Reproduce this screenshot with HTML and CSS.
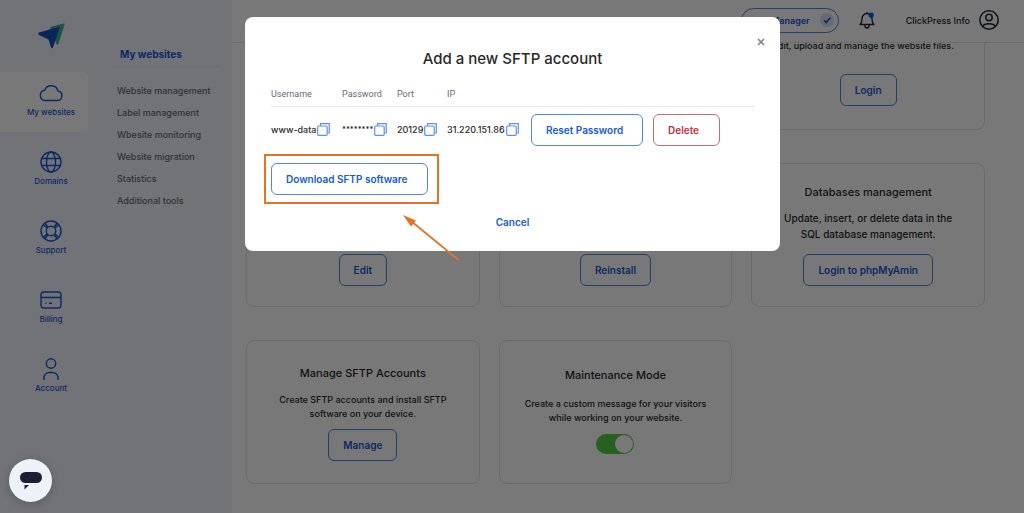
FILE: index.html
```html
<!DOCTYPE html>
<html lang="en">
<head>
    <meta charset="UTF-8">
    <meta name="viewport" content="width=device-width, initial-scale=1.0">
    <title>ClickPress - My websites</title>
    <link rel="stylesheet" href="styles.css">
</head>
<body>
    <div class="app">
        <nav class="rail">
            <a href="#" class="logo" aria-label="ClickPress">
                <svg width="28" height="26" viewBox="0 0 28 26">
                    <path d="M12 4 L25.500 0.500 Q27 0.300 26.500 1.800 L20.500 20.500 Q20 22 18.500 21.500 Z" fill="#38b58a"/>
                    <path d="M1 9.500 L22 3.500 L15 24.500 Q14 26 13 24.500 L10.500 16.500 L1 12 Q-0.500 10.500 1 9.500 Z" fill="#174fc4"/>
                </svg>
            </a>
            <a href="#" class="rail-item active">
                <svg width="26" height="22" viewBox="0 0 26 22"><path d="M7 18.500 H19.500 A4.800 4.800 0 0 0 20 9 A7 7 0 0 0 6.700 8.200 A5.200 5.200 0 0 0 7 18.500 Z"/></svg>
                <span>My websites</span>
            </a>
            <a href="#" class="rail-item">
                <svg width="22" height="22" viewBox="0 0 22 22"><circle cx="11" cy="11" r="10"/><ellipse cx="11" cy="11" rx="4.500" ry="10"/><path d="M1.500 7.500 H20.500 M1.500 14.500 H20.500"/></svg>
                <span>Domains</span>
            </a>
            <a href="#" class="rail-item">
                <svg width="22" height="22" viewBox="0 0 22 22"><circle cx="11" cy="11" r="10"/><circle cx="11" cy="11" r="4.700"/><path d="M3.500 5 L7 8 M5 3.500 L8 7 M18.500 5 L15 8 M17 3.500 L14 7 M3.500 17 L7 14 M5 18.500 L8 15 M18.500 17 L15 14 M17 18.500 L14 15"/></svg>
                <span>Support</span>
            </a>
            <a href="#" class="rail-item">
                <svg width="22" height="22" viewBox="0 0 22 22"><rect x="1" y="3" width="20" height="16" rx="3"/><path d="M1 8.500 H21 M5.500 14.200 H6.500 M9 14.200 H12"/></svg>
                <span>Billing</span>
            </a>
            <a href="#" class="rail-item">
                <svg width="22" height="22" viewBox="0 0 22 22"><circle cx="11" cy="5.500" r="4.700"/><path d="M4 22 V20 A5.500 5.500 0 0 1 9.500 14.500 H12.500 A5.500 5.500 0 0 1 18 20 V22"/></svg>
                <span>Account</span>
            </a>
        </nav>

        <aside class="menu">
            <h2>My websites</h2>
            <a href="#">Website management</a>
            <a href="#">Label management</a>
            <a href="#">Wbesite monitoring</a>
            <a href="#">Website migration</a>
            <a href="#">Statistics</a>
            <a href="#">Additional tools</a>
        </aside>

        <div class="content">
            <header class="topbar">
                <button class="manager">
                    <span>Manager</span>
                    <svg width="14" height="14" viewBox="0 0 14 14"><circle cx="7" cy="7" r="7" fill="#d4e3fb"/><path d="M4 7.300 L6.200 9.500 L10.300 4.800" fill="none" stroke="#1559d6" stroke-width="1.600"/></svg>
                </button>
                <button class="icon-btn" aria-label="Notifications">
                    <svg width="16" height="18" viewBox="0 0 16 18"><path d="M1 13.500 H15 C13.500 12 13 11 13 8.500 V7.500 A5 5 0 0 0 3 7.500 V8.500 C3 11 2.500 12 1 13.500 Z M6 14 V15 A2 2 0 0 0 10 15 V14 M8 2.500 V1" fill="none" stroke="#222838" stroke-width="1.400" stroke-linejoin="round"/><circle cx="12.200" cy="4.200" r="2.600" fill="#1559d6"/></svg>
                </button>
                <a href="#" class="user">
                    <span>ClickPress Info</span>
                    <svg width="20" height="20" viewBox="0 0 20 20" fill="none" stroke="#222838" stroke-width="1.500"><circle cx="10" cy="10" r="9.200"/><circle cx="10" cy="7.500" r="3.200"/><path d="M4 16.500 C5 12.800 15 12.800 16 16.500"/></svg>
                </a>
            </header>

            <main>
                <div class="cards">
                    <section class="card files">
                        <p>Edit, upload and manage the website files.</p>
                        <button class="btn">Login</button>
                    </section>
                    <section class="card">
                        <button class="btn">Edit</button>
                    </section>
                    <section class="card">
                        <button class="btn">Reinstall</button>
                    </section>
                    <section class="card">
                        <h3>Databases management</h3>
                        <p class="large">Update, insert, or delete data in the SQL database management.</p>
                        <button class="btn">Login to phpMyAmin</button>
                    </section>
                    <section class="card sftp">
                        <h3>Manage SFTP Accounts</h3>
                        <p>Create SFTP accounts and install SFTP software on your device.</p>
                        <button class="btn">Manage</button>
                    </section>
                    <section class="card maintenance">
                        <h3 id="maintenance">Maintenance Mode</h3>
                        <p>Create a custom message for your visitors while working on your website.</p>
                        <input type="checkbox" class="switch" aria-labelledby="maintenance" checked>
                    </section>
                </div>
            </main>
        </div>
    </div>

    <div class="overlay">
        <div class="modal" role="dialog" aria-labelledby="modalTitle">
            <button class="close" aria-label="Close">
                <svg width="8" height="8" viewBox="0 0 8 8"><path d="M1 1 L7 7 M7 1 L1 7" stroke="#858585" stroke-width="1.700"/></svg>
            </button>
            <h1 id="modalTitle">Add a new SFTP account</h1>
            <table>
                <thead>
                    <tr>
                        <th class="col-user">Username</th>
                        <th class="col-pass">Password</th>
                        <th class="col-port">Port</th>
                        <th class="col-ip">IP</th>
                        <th></th>
                    </tr>
                </thead>
                <tbody>
                    <tr>
                        <td><div class="value">www-data<button class="copy" aria-label="Copy username"><svg width="13" height="13" viewBox="0 0 13 13"><path d="M3.500 3 V0.700 H12.300 V10 H10.500"/><rect x="0.700" y="3" width="9.500" height="9.300" rx="1"/></svg></button></div></td>
                        <td><div class="value"><span class="stars">********</span><button class="copy" aria-label="Copy password"><svg width="13" height="13" viewBox="0 0 13 13"><path d="M3.500 3 V0.700 H12.300 V10 H10.500"/><rect x="0.700" y="3" width="9.500" height="9.300" rx="1"/></svg></button></div></td>
                        <td><div class="value">20129<button class="copy" aria-label="Copy port"><svg width="13" height="13" viewBox="0 0 13 13"><path d="M3.500 3 V0.700 H12.300 V10 H10.500"/><rect x="0.700" y="3" width="9.500" height="9.300" rx="1"/></svg></button></div></td>
                        <td><div class="value">31.220.151.86<button class="copy" aria-label="Copy IP"><svg width="13" height="13" viewBox="0 0 13 13"><path d="M3.500 3 V0.700 H12.300 V10 H10.500"/><rect x="0.700" y="3" width="9.500" height="9.300" rx="1"/></svg></button></div></td>
                        <td><div class="actions"><button class="btn reset">Reset Password</button><button class="btn danger">Delete</button></div></td>
                    </tr>
                </tbody>
            </table>
            <div class="download">
                <button class="btn">Download SFTP software</button>
                <svg class="arrow" width="58" height="48" viewBox="0 0 58 48"><path d="M55.500 45 L8 6" stroke="#e47325" stroke-width="1.800"/><path d="M0 0 L13 5.500 L8 11.500 Z" fill="#e47325"/></svg>
            </div>
            <button class="cancel">Cancel</button>
        </div>
    </div>

    <button class="chat" aria-label="Open chat">
        <svg width="22" height="18" viewBox="0 0 22 18" fill="#1d2035"><rect x="0" y="0" width="22" height="11" rx="5.500"/><path d="M4.500 13 H9 L4.500 17.500 Z"/></svg>
    </button>
</body>
</html>
```
FILE: styles.css
```css
:root {
    --blue: #1559d6;
    --blue-border: #4f86e0;
    --text: #292929;
    --muted: #686a70;
    --side-bg: #f1f5fc;
    --card-border: #e4e6ec;
    --highlight: #e47325;
}
* {
    margin: 0;
    padding: 0;
    box-sizing: border-box;
}
body {
    font-family: Inter, "Liberation Sans", sans-serif;
    font-size: 10px;
    font-weight: 500;
    color: var(--text);
    background-color: #ffffff;
}
button {
    font: inherit;
    color: inherit;
    background: none;
    border: none;
    cursor: pointer;
}
a {
    color: inherit;
    text-decoration: none;
}
svg {
    display: block;
}
.app {
    display: flex;
    height: 100vh;
    overflow: hidden;
}

/* Sidebar */
.rail {
    width: 88px;
    flex-shrink: 0;
    display: flex;
    flex-direction: column;
    gap: 9px;
    background-color: var(--side-bg);
}
.logo {
    height: 63px;
    padding: 23px 0 0 38px;
}
.rail-item {
    height: 60px;
    padding: 10px 0 0 14px;
    display: flex;
    flex-direction: column;
    align-items: center;
    gap: 2px;
    font-size: 8px;
    line-height: 12px;
    color: var(--blue);
}
.rail-item svg {
    fill: none;
    stroke: var(--blue);
    stroke-width: 1.4;
}
.rail-item.active {
    background-color: #ffffff;
    border-radius: 0 4px 4px 0;
}
.menu {
    width: 144px;
    flex-shrink: 0;
    padding: 42px 12px 0 24px;
    display: flex;
    flex-direction: column;
    background-color: var(--side-bg);
    color: var(--muted);
    font-size: 9px;
    line-height: 22px;
}
.menu h2 {
    margin-bottom: 13px;
    padding-left: 8px;
    border-bottom: 1px solid var(--card-border);
    font-size: 10px;
    font-weight: 700;
    line-height: 24px;
    color: var(--blue);
}
.menu a {
    padding-left: 5px;
}

/* Header */
.content {
    flex: 1;
    display: flex;
    flex-direction: column;
    min-width: 0;
}
.topbar {
    height: 43px;
    flex-shrink: 0;
    padding: 0 25px 2px 0;
    display: flex;
    align-items: center;
    justify-content: flex-end;
    border-bottom: 1px solid var(--card-border);
}
.manager {
    width: 98px;
    height: 25px;
    padding-right: 4px;
    display: flex;
    align-items: center;
    justify-content: flex-end;
    gap: 10px;
    border: 1px solid var(--blue-border);
    border-radius: 13px;
    font-size: 9px;
    font-weight: 600;
    color: var(--blue);
}
.icon-btn {
    margin: 0 31px 0 20px;
}
.user {
    display: flex;
    align-items: center;
    gap: 9px;
    font-size: 9px;
}

/* Cards */
main {
    flex: 1;
    overflow: hidden;
}
.cards {
    margin: -57px 39px 0 14px;
    display: grid;
    grid-template-columns: repeat(3, 1fr);
    grid-auto-rows: 144px;
    column-gap: 19px;
    row-gap: 33px;
}
.card {
    padding: 20px 24px;
    display: flex;
    flex-direction: column;
    align-items: center;
    border: 1px solid var(--card-border);
    border-radius: 8px;
    text-align: center;
}
.card.files {
    grid-column: 3;
    padding: 52px 0 23px;
}
.card.files p {
    padding-right: 10px;
}
.card h3 {
    margin-bottom: 10px;
    font-size: 11px;
    font-weight: 500;
    line-height: 16px;
}
.card p {
    font-size: 9px;
    line-height: 14px;
}
.card p.large {
    font-size: 10px;
    line-height: 16px;
}
.card .btn {
    margin-top: auto;
}
.card.sftp {
    padding: 24px 24px 22px;
}
.card.sftp h3 {
    margin-bottom: 12px;
}
.card.maintenance {
    padding: 26px 24px 29px;
}
.card.maintenance h3 {
    margin-bottom: 14px;
}
.btn {
    height: 32px;
    padding: 0 14px;
    border: 1px solid var(--blue-border);
    border-radius: 6px;
    font-size: 10px;
    font-weight: 600;
    color: var(--blue);
    white-space: nowrap;
}
.switch {
    appearance: none;
    width: 38px;
    height: 20px;
    margin-top: auto;
    padding: 1px;
    display: flex;
    justify-content: flex-end;
    border-radius: 10px;
    background-color: #54cf46;
    cursor: pointer;
}
.switch::before {
    content: "";
    width: 18px;
    height: 18px;
    border-radius: 50%;
    background-color: #ffffff;
}

/* Modal */
.overlay {
    position: fixed;
    inset: 0;
    padding: 17px 0 0 1px;
    display: flex;
    align-items: flex-start;
    justify-content: center;
    background-color: rgba(0, 0, 0, 0.53);
}
.modal {
    position: relative;
    width: 535px;
    padding: 30px 26px 19px;
    border-radius: 8px;
    background-color: #ffffff;
}
.close {
    position: absolute;
    top: 21px;
    right: 15px;
}
.modal h1 {
    margin-bottom: 12px;
    font-size: 15px;
    font-weight: 500;
    line-height: 24px;
    text-align: center;
}
table {
    width: 100%;
    table-layout: fixed;
    border-collapse: collapse;
}
th {
    height: 23px;
    border-bottom: 1px solid #e4e4e4;
    font-family: Roboto, sans-serif;
    font-size: 9px;
    font-weight: 400;
    color: var(--muted);
    text-align: left;
    vertical-align: top;
    line-height: 22px;
}
.col-user {
    width: 71px;
}
.col-pass {
    width: 55px;
}
.col-port {
    width: 50px;
}
.col-ip {
    width: 84px;
}
td {
    padding-top: 7px;
    vertical-align: middle;
}
.value {
    display: flex;
    align-items: center;
    gap: 1px;
    font-size: 9px;
}
.stars {
    font-size: 7px;
    font-weight: 700;
}
.copy svg {
    fill: none;
    stroke: #5d92e3;
    stroke-width: 1.2;
}
.actions {
    display: flex;
    gap: 10px;
}
.modal .btn {
    text-align: left;
}
.reset {
    width: 112px;
}
.btn.danger {
    width: 67px;
    border-color: #c96a75;
    color: #c5303c;
}
.download {
    position: relative;
    width: 157px;
    margin-top: 17px;
}
.download .btn {
    width: 100%;
}
.download::after {
    content: "";
    position: absolute;
    inset: -9px -11px -9px -7px;
    border: 2px solid var(--highlight);
    pointer-events: none;
}
.arrow {
    position: absolute;
    top: 52px;
    left: 132px;
}
.cancel {
    display: block;
    margin: 17px auto 0;
    font-size: 10px;
    font-weight: 600;
    line-height: 20px;
    color: var(--blue);
}

/* Chat */
.chat {
    position: fixed;
    left: 9px;
    bottom: 11px;
    width: 43px;
    height: 43px;
    display: grid;
    place-items: center;
    border-radius: 50%;
    background-color: #edf1f8;
    box-shadow: 0 2px 10px rgba(0, 0, 0, 0.2);
}
```
